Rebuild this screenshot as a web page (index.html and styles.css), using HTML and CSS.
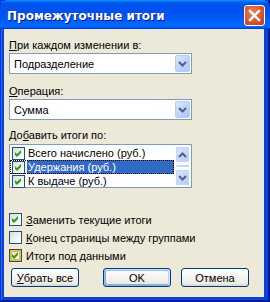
FILE: index.html
```html
<!DOCTYPE html>
<html lang="ru">
<head>
    <meta charset="UTF-8">
    <title>Промежуточные итоги</title>
    <link rel="stylesheet" href="styles.css">
</head>
<body>
    <div class="window">
        <div class="titlebar">
            <span class="title">Промежуточные итоги</span>
            <div class="close">
                <svg width="13" height="13" viewBox="0 0 13 13"><path d="M2 2 L11 11 M11 2 L2 11" stroke="#fff" stroke-width="2.4" stroke-linecap="square"/></svg>
            </div>
        </div>
        <div class="body">
            <div class="field-label"><u>П</u>ри каждом изменении в:</div>
            <div class="combo">
                <span class="combo-value">Подразделение</span>
                <span class="drop"><svg width="9" height="6" viewBox="0 0 9 6"><path d="M1 1 L4.5 4.5 L8 1" fill="none" stroke="#4D6185" stroke-width="2"/></svg></span>
            </div>
            <div class="field-label gap"><u>О</u>перация:</div>
            <div class="combo">
                <span class="combo-value">Сумма</span>
                <span class="drop"><svg width="9" height="6" viewBox="0 0 9 6"><path d="M1 1 L4.5 4.5 L8 1" fill="none" stroke="#4D6185" stroke-width="2"/></svg></span>
            </div>
            <div class="field-label gap2">До<u>б</u>авить итоги по:</div>
            <div class="listbox">
                <div class="items">
                    <div class="item">
                        <span class="cb checked"><svg width="11" height="11" viewBox="0 0 11 11"><polygon points="2,4 4,6 8,2 8,5 4,9 2,7" fill="#21A121"/></svg></span>
                        <span class="item-text">Всего начислено (руб.)</span>
                    </div>
                    <div class="item selected">
                        <span class="cb checked"><svg width="11" height="11" viewBox="0 0 11 11"><polygon points="2,4 4,6 8,2 8,5 4,9 2,7" fill="#21A121"/></svg></span>
                        <span class="item-text">Удержания (руб.)</span>
                    </div>
                    <div class="item">
                        <span class="cb checked"><svg width="11" height="11" viewBox="0 0 11 11"><polygon points="2,4 4,6 8,2 8,5 4,9 2,7" fill="#21A121"/></svg></span>
                        <span class="item-text">К выдаче (руб.)</span>
                    </div>
                </div>
                <div class="scrollbar">
                    <div class="sb-btn"><svg width="9" height="6" viewBox="0 0 9 6"><path d="M1 5 L4.5 1.5 L8 5" fill="none" stroke="#4D6185" stroke-width="2"/></svg></div>
                    <div class="sb-thumb"></div>
                    <div class="sb-btn"><svg width="9" height="6" viewBox="0 0 9 6"><path d="M1 1 L4.5 4.5 L8 1" fill="none" stroke="#4D6185" stroke-width="2"/></svg></div>
                </div>
            </div>
            <div class="options">
                <div class="check">
                    <span class="cb checked"><svg width="11" height="11" viewBox="0 0 11 11"><polygon points="2,4 4,6 8,2 8,5 4,9 2,7" fill="#21A121"/></svg></span>
                    <span><u>З</u>аменить текущие итоги</span>
                </div>
                <div class="check">
                    <span class="cb"></span>
                    <span><u>К</u>онец страницы между группами</span>
                </div>
                <div class="check">
                    <span class="cb checked hover"><svg width="11" height="11" viewBox="0 0 11 11"><polygon points="2,4 4,6 8,2 8,5 4,9 2,7" fill="#21A121"/></svg></span>
                    <span>Ито<u>г</u>и под данными</span>
                </div>
            </div>
            <div class="buttons">
                <div class="btn"><u>У</u>брать все</div>
                <div class="btn default">OK</div>
                <div class="btn">Отмена</div>
            </div>
        </div>
    </div>
</body>
</html>
```

FILE: styles.css
```css
body {
    margin: 0;
    padding: 0;
    font-family: "Liberation Sans", Arial, sans-serif;
    font-size: 11px;
    color: #000;
}

.window {
    width: 270px;
    height: 302px;
    display: flex;
    flex-direction: column;
    background: #0842DB;
    box-shadow: inset -1px -1px #00138C, inset 1px 1px #0831D9, inset -2px -2px #001EA0, inset 2px 2px #166AEE;
}

.titlebar {
    height: 29px;
    display: flex;
    align-items: center;
    justify-content: space-between;
    padding: 0 5px 0 7px;
    border-radius: 7px 7px 0 0;
    background: linear-gradient(180deg, #0997FF 0%, #0053EE 10%, #0050EE 40%, #0066FF 88%, #0066FF 93%, #005BFF 95%, #003DD7 96%, #003DD7 100%);
}

.title {
    color: #fff;
    font-family: "DejaVu Sans", sans-serif;
    font-weight: bold;
    font-size: 12px;
    text-shadow: 1px 1px #0F1089;
    margin-top: 2px;
}

.close {
    width: 19px;
    height: 19px;
    margin-top: 2px;
    border: 1px solid #fff;
    border-radius: 3px;
    display: flex;
    align-items: center;
    justify-content: center;
    background: radial-gradient(circle at 40% 35%, #E9845E 0%, #D8572F 55%, #B8361A 100%);
}

.body {
    flex: 1;
    margin: 0 6px 5px 4px;
    padding: 10px 5px 0 5px;
    background: #ECE9D8;
}

.field-label {
    line-height: 13px;
    margin-bottom: 1px;
}

.field-label.gap {
    margin-top: 11px;
}

.field-label.gap2 {
    margin-top: 9px;
    margin-bottom: 2px;
}

.combo {
    width: 183px;
    height: 21px;
    box-sizing: border-box;
    border: 1px solid #7F9DB9;
    background: #fff;
    display: flex;
    align-items: center;
    justify-content: space-between;
    padding: 1px;
}

.combo-value {
    padding-left: 3px;
}

.drop {
    width: 15px;
    height: 17px;
    box-sizing: border-box;
    border: 1px solid #B9CCF7;
    border-radius: 2px;
    background: linear-gradient(135deg, #DCE6FD 0%, #C3D4FB 50%, #B2C6F7 100%);
    display: flex;
    align-items: center;
    justify-content: center;
}

.listbox {
    width: 183px;
    height: 44px;
    box-sizing: border-box;
    border: 1px solid #7F9DB9;
    background: #fff;
    display: flex;
}

.items {
    flex: 1;
    padding-top: 1px;
}

.item {
    height: 14px;
    display: flex;
    align-items: center;
    padding-left: 2px;
    white-space: nowrap;
    overflow: hidden;
}

.item .cb {
    margin-right: 2px;
}

.item-text {
    line-height: 13px;
    padding: 0 1px;
}

.item.selected {
    outline: 1px dotted #000;
    outline-offset: -1px;
}

.item.selected .item-text {
    flex: 1;
    background: #316AC5;
    color: #fff;
    align-self: stretch;
    line-height: 14px;
    box-sizing: border-box;
    border: 1px dotted #E8A24A;
    border-left: none;
    line-height: 12px;
}

.scrollbar {
    width: 17px;
    display: flex;
    flex-direction: column;
    padding: 1px 0;
    background: #FAF9F5;
}

.sb-btn {
    height: 15px;
    margin: 0 1px;
    border: 1px solid #fff;
    border-radius: 2px;
    box-shadow: 0 0 0 1px #C5D4F6 inset;
    background: linear-gradient(135deg, #E0E9FE 0%, #C6D6FC 55%, #B4C8F7 100%);
    display: flex;
    align-items: center;
    justify-content: center;
}

.sb-thumb {
    flex: 1;
    margin: 1px 1px;
    border: 1px solid #fff;
    border-radius: 2px;
    background: linear-gradient(90deg, #CADAFD 0%, #BCCFFA 100%);
}

.cb {
    width: 13px;
    height: 13px;
    box-sizing: border-box;
    border: 1px solid #1C5180;
    background: linear-gradient(135deg, #DCDCD7 0%, #F4F4F2 60%, #fff 100%);
    display: inline-flex;
    flex-shrink: 0;
}

.cb.hover {
    box-shadow: inset 0 0 0 2px #F8B636;
}

.options {
    margin-top: 25px;
}

.check {
    height: 13px;
    display: flex;
    align-items: center;
    gap: 4px;
    margin-bottom: 5px;
}

.buttons {
    display: flex;
    margin-top: 6px;
    padding-left: 2px;
}

.btn {
    width: 71px;
    height: 19px;
    box-sizing: border-box;
    border: 1px solid #003C74;
    border-radius: 3px;
    background: linear-gradient(180deg, #fff 0%, #ECEBE6 86%, #D6D0C5 100%);
    display: flex;
    align-items: center;
    justify-content: center;
    margin-right: 10px;
}

.btn.default {
    margin-right: 10px;
    margin-left: 14px;
    box-shadow: inset -1px 1px #CEE7FF, inset 1px 2px #98B8EA, inset -2px 2px #BCD4F6, inset 1px -1px #89ADE4, inset 2px -2px #89ADE4;
}
```
